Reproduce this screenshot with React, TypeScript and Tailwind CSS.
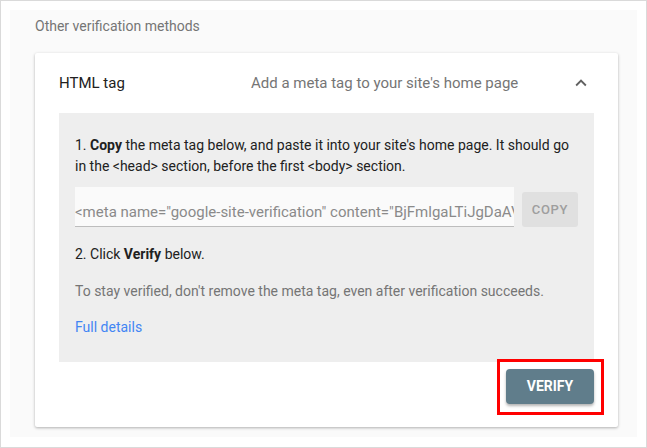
export default function App() {
  return (
    <div
      className="w-[647px] h-[448px] border border-[#dadada] bg-white pt-[9px] pl-[9px] pr-[9px] pb-[10px]"
      style={{ fontFamily: "Roboto, 'Liberation Sans', sans-serif" }}
    >
      <div className="h-full bg-[#fafafa] pl-[25px] pr-[19px] pb-[10px] flex flex-col">
        {/* Section title */}
        <div className="h-[43px] pt-[6px] text-[14px] leading-[20px] text-[#757575]">
          Other verification methods
        </div>

        {/* Card */}
        <div className="flex-1 bg-white rounded-[2px] shadow-[0_1px_3px_rgba(0,0,0,0.3)] flex flex-col">
          <div className="h-[60px] flex items-center pl-6 pr-[26px]">
            <div className="w-[192px] text-[15px] text-[#212121]">HTML tag</div>
            <div className="flex-1 text-[15px] text-[#757575]">Add a meta tag to your site's home page</div>
            <svg width="22" height="22" viewBox="0 0 24 24" fill="#616161">
              <path d="M7.41 15.41 12 10.83l4.59 4.58L18 14l-6-6-6 6z" />
            </svg>
          </div>

          {/* Instructions */}
          <div className="mx-6 bg-[#eeeeee] pl-4 pr-4 pt-[22px] pb-[24px] text-[14px] leading-[21px] text-[#212121]">
            <p>
              1. <b className="font-bold">Copy</b> the meta tag below, and paste it into your site's home page. It should go
              in the &lt;head&gt; section, before the first &lt;body&gt; section.
            </p>
            <div className="flex items-end gap-2 mt-[10px]">
              <div className="flex-1 h-[40px] bg-[#fafafa] border-b border-[#bdbdbd] flex items-end pb-[3px] overflow-hidden">
                <span className="whitespace-nowrap text-[15px] text-[#8a8a8a]">
                  &lt;meta name="google-site-verification" content="BjFmlgaLTiJgDaAVxk3mQ2pR" /&gt;
                </span>
              </div>
              <button className="w-[56px] h-[35px] rounded-[3px] bg-[#e0e0e0] text-[13px] font-medium tracking-[0.05em] text-[#9e9e9e]">
                COPY
              </button>
            </div>
            <p className="mt-[17px]">
              2. Click <b className="font-bold">Verify</b> below.
            </p>
            <p className="mt-[16px] text-[#757575]">
              To stay verified, don't remove the meta tag, even after verification succeeds.
            </p>
            <p className="mt-[15px] text-[#4285f4]">Full details</p>
          </div>

          <div className="flex justify-end mr-6 mt-[7px]">
            <div className="relative">
              <button className="w-[88px] h-[35px] rounded-[4px] bg-[#607d8b] text-white text-[14px] font-bold shadow-[0_2px_3px_rgba(0,0,0,0.3)]">
                VERIFY
              </button>
              <span className="absolute -left-[9px] -top-[10px] -right-[10px] -bottom-[11px] border-[3px] border-[#ff0000]" />
            </div>
          </div>
        </div>
      </div>
    </div>
  );
}
